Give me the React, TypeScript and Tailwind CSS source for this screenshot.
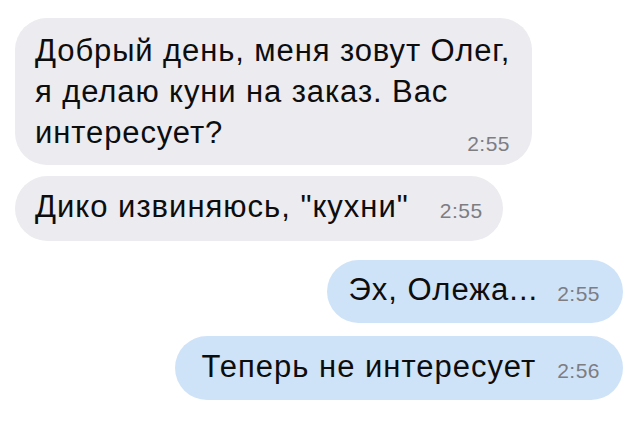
const font = { fontFamily: '"Liberation Sans", Arial, sans-serif' }

function Time({ children }: { children: string }) {
  return <span className="shrink-0 text-[21px] leading-[21px] tracking-[0.5px] text-[#7d7d82] mb-[-4px]">{children}</span>
}

export default function App() {
  return (
    <div className="w-[640px] h-[428px] bg-white text-[#0d0d0d] overflow-hidden" style={font}>
      <div className="flex flex-col pt-[18px] px-[15px]">
        <div className="w-[517px] rounded-[32px] bg-[#ebebf0] pl-[20px] pr-[22px] pt-[12px] pb-[15px] flex flex-col">
          <p className="text-[31px] leading-[41px] tracking-[0.9px] whitespace-nowrap">
            Добрый день, меня зовут Олег,
            <br />я делаю куни на заказ. Вас
            <br />интересует?
          </p>
          <div className="flex justify-end -mt-[20px]">
            <Time>2:55</Time>
          </div>
        </div>

        <div className="mt-[11px] self-start h-[65px] rounded-[33px] bg-[#ebebf0] pl-[20px] pr-[20px] flex items-end pb-[16px] whitespace-nowrap">
          <span className="text-[31px] leading-[36px] tracking-[1px]">Дико извиняюсь, "кухни"</span>
          <span className="ml-[31px]"><Time>2:55</Time></span>
        </div>

        <div className="mt-[19px] self-end mr-[2px] h-[63px] rounded-[32px] bg-[#cfe3f8] pl-[22px] pr-[23px] flex items-end pb-[15px] whitespace-nowrap">
          <span className="text-[31px] leading-[36px] tracking-[1px]">Эх, Олежа...</span>
          <span className="ml-[19px]"><Time>2:55</Time></span>
        </div>

        <div className="mt-[13px] self-end mr-[2px] h-[64px] rounded-[32px] bg-[#cfe3f8] pl-[27px] pr-[23px] flex items-end pb-[15px] whitespace-nowrap">
          <span className="text-[31px] leading-[36px] tracking-[1px]">Теперь не интересует</span>
          <span className="ml-[21px]"><Time>2:56</Time></span>
        </div>
      </div>
    </div>
  )
}
